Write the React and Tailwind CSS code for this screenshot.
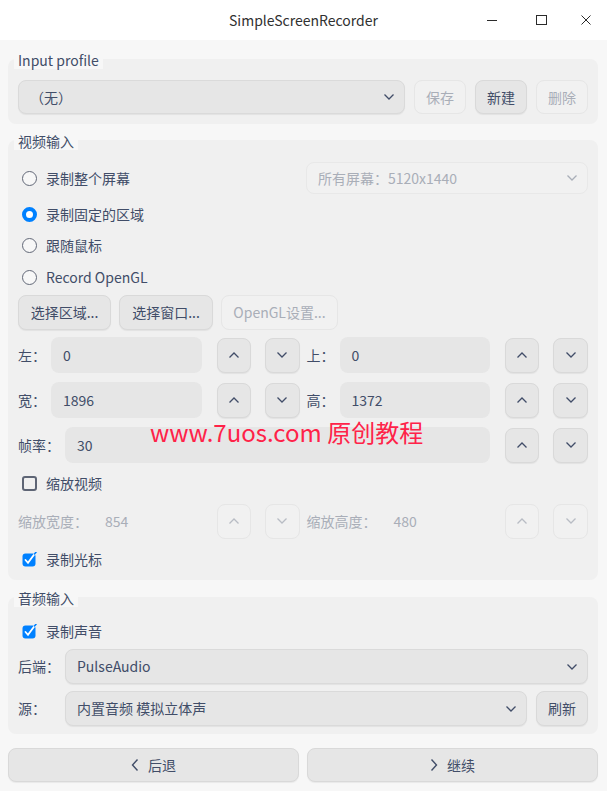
import React from "react";

const FONT = { fontFamily: '"Noto Sans CJK SC", "Noto Sans", sans-serif' };

function ChevronDown({ className = "", color = "#414d68" }) {
  return (
    <svg width="12" height="8" viewBox="0 0 12 8" className={className}>
      <polyline points="1.5,1.5 6,6 10.5,1.5" fill="none" stroke={color} strokeWidth="1.3" />
    </svg>
  );
}
function ChevronUp({ color = "#414d68" }) {
  return (
    <svg width="12" height="8" viewBox="0 0 12 8">
      <polyline points="1.5,6.5 6,2 10.5,6.5" fill="none" stroke={color} strokeWidth="1.3" />
    </svg>
  );
}

function Group({ title, className = "", children }) {
  return (
    <div className={"flex flex-col rounded-[8px] bg-[#f0f0f0] px-[10px] " + className}>
      <div className="-ml-[4px] -mt-[7px] self-start bg-[#f7f7f7] px-[4px] text-[14px] leading-[17px] text-[#414d68]">
        {title}
      </div>
      {children}
    </div>
  );
}

function Btn({ children, disabled, className = "" }) {
  return (
    <div
      className={
        "flex items-center justify-center rounded-[8px] border text-[14px] " +
        (disabled
          ? "border-[#e6e6e6] bg-[#f1f1f1] text-[#a9aeb8] "
          : "border-[#d9d9d9] bg-[#e6e6e6] text-[#414d68] shadow-[0_1px_1px_rgba(0,0,0,0.06)] ") +
        className
      }
    >
      {children}
    </div>
  );
}

function Combo({ children, disabled, className = "" }) {
  return (
    <div
      className={
        "flex items-center justify-between rounded-[8px] border pl-[11px] pr-[9px] text-[14px] " +
        (disabled
          ? "border-[#e8e8e8] bg-[#f1f1f1] text-[#a9aeb8] "
          : "border-[#dadada] bg-[#e6e6e6] text-[#414d68] shadow-[0_1px_1px_rgba(0,0,0,0.06)] ") +
        className
      }
    >
      <span>{children}</span>
      <ChevronDown color={disabled ? "#a9aeb8" : "#414d68"} />
    </div>
  );
}

function Radio({ checked, label, className = "" }) {
  return (
    <div className={"flex items-center gap-[9px] pl-[4px] text-[14px] text-[#414d68] " + className}>
      {checked ? (
        <div className="h-[15px] w-[15px] rounded-full border-[4px] border-[#0081ff] bg-white" />
      ) : (
        <div className="h-[15px] w-[15px] rounded-full border border-[#626877] bg-[#f7f7f7]" />
      )}
      <span>{label}</span>
    </div>
  );
}

function Check({ checked, label, className = "" }) {
  return (
    <div className={"flex items-center gap-[9px] pl-[4px] text-[14px] text-[#414d68] " + className}>
      {checked ? (
        <svg width="15" height="15" viewBox="0 0 15 15">
          <rect x="0.5" y="1.5" width="13" height="13" rx="3" fill="#0081ff" />
          <polyline points="3.5,8 6,10.8 12.5,2" fill="none" stroke="#ffffff" strokeWidth="1.8" strokeLinecap="round" />
          <line x1="12.5" y1="2" x2="14" y2="0.3" stroke="#0081ff" strokeWidth="1.6" strokeLinecap="round" />
        </svg>
      ) : (
        <div className="h-[15px] w-[15px] rounded-[3px] border-2 border-[#5e6575]" />
      )}
      <span>{label}</span>
    </div>
  );
}

function Spin({ label, value, disabled }) {
  const txt = disabled ? "text-[#a9aeb8]" : "text-[#414d68]";
  return (
    <div className="flex flex-1 items-center">
      <span className={"mr-[5px] whitespace-nowrap text-[14px] " + txt}>{label}</span>
      <div
        className={
          "flex h-[36px] flex-1 items-center rounded-[8px] pl-[12px] text-[14px] " +
          (disabled ? "bg-[#f0f0f0] text-[#a9aeb8]" : "bg-[#e6e6e6] text-[#414d68]")
        }
      >
        {value}
      </div>
      <Btn disabled={disabled} className="ml-[15px] h-[35px] w-[34px]">
        <ChevronUp color={disabled ? "#b8bcc4" : "#414d68"} />
      </Btn>
      <Btn disabled={disabled} className="ml-[14px] h-[35px] w-[35px]">
        <ChevronDown color={disabled ? "#b8bcc4" : "#414d68"} />
      </Btn>
    </div>
  );
}

export default function App() {
  return (
    <div className="relative flex h-[791px] w-[607px] flex-col overflow-hidden bg-[#f7f7f7]" style={FONT}>
      {/* Title bar */}
      <div className="relative flex h-[40px] items-center justify-center bg-white">
        <span className="text-[14px] text-[#303030]">SimpleScreenRecorder</span>
        <div className="absolute right-0 top-0 flex h-[40px] items-center">
          <div className="flex w-[49px] justify-center">
            <svg width="12" height="12" viewBox="0 0 12 12">
              <line x1="1" y1="6.5" x2="11" y2="6.5" stroke="#2b2b2b" strokeWidth="1" />
            </svg>
          </div>
          <div className="flex w-[49px] justify-center">
            <svg width="12" height="12" viewBox="0 0 12 12">
              <rect x="1.5" y="1.5" width="10" height="9" fill="none" stroke="#2b2b2b" strokeWidth="1" />
            </svg>
          </div>
          <div className="flex w-[42px] justify-center">
            <svg width="12" height="12" viewBox="0 0 12 12">
              <line x1="1.5" y1="1.5" x2="10.5" y2="10.5" stroke="#2b2b2b" strokeWidth="1" />
              <line x1="10.5" y1="1.5" x2="1.5" y2="10.5" stroke="#2b2b2b" strokeWidth="1" />
            </svg>
          </div>
        </div>
      </div>

      <div className="flex flex-col px-[8px] pr-[9px]">
        {/* Input profile */}
        <Group title="Input profile" className="mt-[19px] pb-[10px]">
          <div className="mt-[11px] flex h-[34px] gap-[9px]">
            <Combo className="flex-1">（无）</Combo>
            <Btn disabled className="w-[52px]">保存</Btn>
            <Btn className="w-[52px]">新建</Btn>
            <Btn disabled className="w-[52px]">删除</Btn>
          </div>
        </Group>

        {/* Video input */}
        <Group title="视频输入" className="mt-[16px] pb-[8px]">
          <div className="mt-[12px] flex h-[32px] items-center">
            <Radio label="录制整个屏幕" className="flex-1" />
            <Combo disabled className="h-[32px] w-[282px]">所有屏幕：5120x1440</Combo>
          </div>
          <Radio checked label="录制固定的区域" className="mt-[7px] h-[26px]" />
          <Radio label="跟随鼠标" className="mt-[5px] h-[26px]" />
          <Radio label="Record OpenGL" className="mt-[6px] h-[26px]" />
          <div className="mt-[5px] flex h-[35px] gap-[8px]">
            <Btn className="w-[93px]">选择区域...</Btn>
            <Btn className="w-[94px]">选择窗口...</Btn>
            <Btn disabled className="w-[117px]">OpenGL设置...</Btn>
          </div>
          <div className="mt-[7px] flex gap-[7px]">
            <Spin label="左：" value="0" />
            <Spin label="上：" value="0" />
          </div>
          <div className="mt-[9px] flex gap-[7px]">
            <Spin label="宽：" value="1896" />
            <Spin label="高：" value="1372" />
          </div>
          <div className="mt-[9px] flex">
            <Spin label="帧率：" value="30" />
          </div>
          <Check label="缩放视频" className="mt-[7px] h-[26px]" />
          <div className="mt-[7px] flex gap-[7px]">
            <Spin disabled label="缩放宽度：" value="854" />
            <Spin disabled label="缩放高度：" value="480" />
          </div>
          <Check checked label="录制光标" className="mt-[7px] h-[26px]" />
        </Group>

        {/* Audio input */}
        <Group title="音频输入" className="mt-[17px] pb-[8px]">
          <Check checked label="录制声音" className="mt-[11px] h-[26px]" />
          <div className="mt-[5px] flex items-center">
            <span className="mr-[5px] text-[14px] text-[#414d68]">后端：</span>
            <Combo className="h-[35px] flex-1">PulseAudio</Combo>
          </div>
          <div className="mt-[7px] flex items-center">
            <span className="mr-[5px] w-[42px] text-[14px] text-[#414d68]">源：</span>
            <Combo className="h-[35px] flex-1">内置音频 模拟立体声</Combo>
            <Btn className="ml-[9px] h-[35px] w-[52px]">刷新</Btn>
          </div>
        </Group>

        {/* Bottom buttons */}
        <div className="mt-[14px] flex h-[34px] gap-[8px]">
          <Btn className="flex-1 gap-[9px]">
            <svg width="8" height="14" viewBox="0 0 8 14">
              <polyline points="6.5,1.5 1.5,7 6.5,12.5" fill="none" stroke="#414d68" strokeWidth="1.4" />
            </svg>
            <span>后退</span>
          </Btn>
          <Btn className="flex-1 gap-[9px]">
            <svg width="8" height="14" viewBox="0 0 8 14">
              <polyline points="1.5,1.5 6.5,7 1.5,12.5" fill="none" stroke="#414d68" strokeWidth="1.4" />
            </svg>
            <span>继续</span>
          </Btn>
        </div>
      </div>

      {/* Watermark overlay */}
      <div className="pointer-events-none absolute left-[150px] top-[416px] whitespace-nowrap text-[24px] leading-[32px] text-[#ff2248]">
        www.7uos.com 原创教程
      </div>
    </div>
  );
}
